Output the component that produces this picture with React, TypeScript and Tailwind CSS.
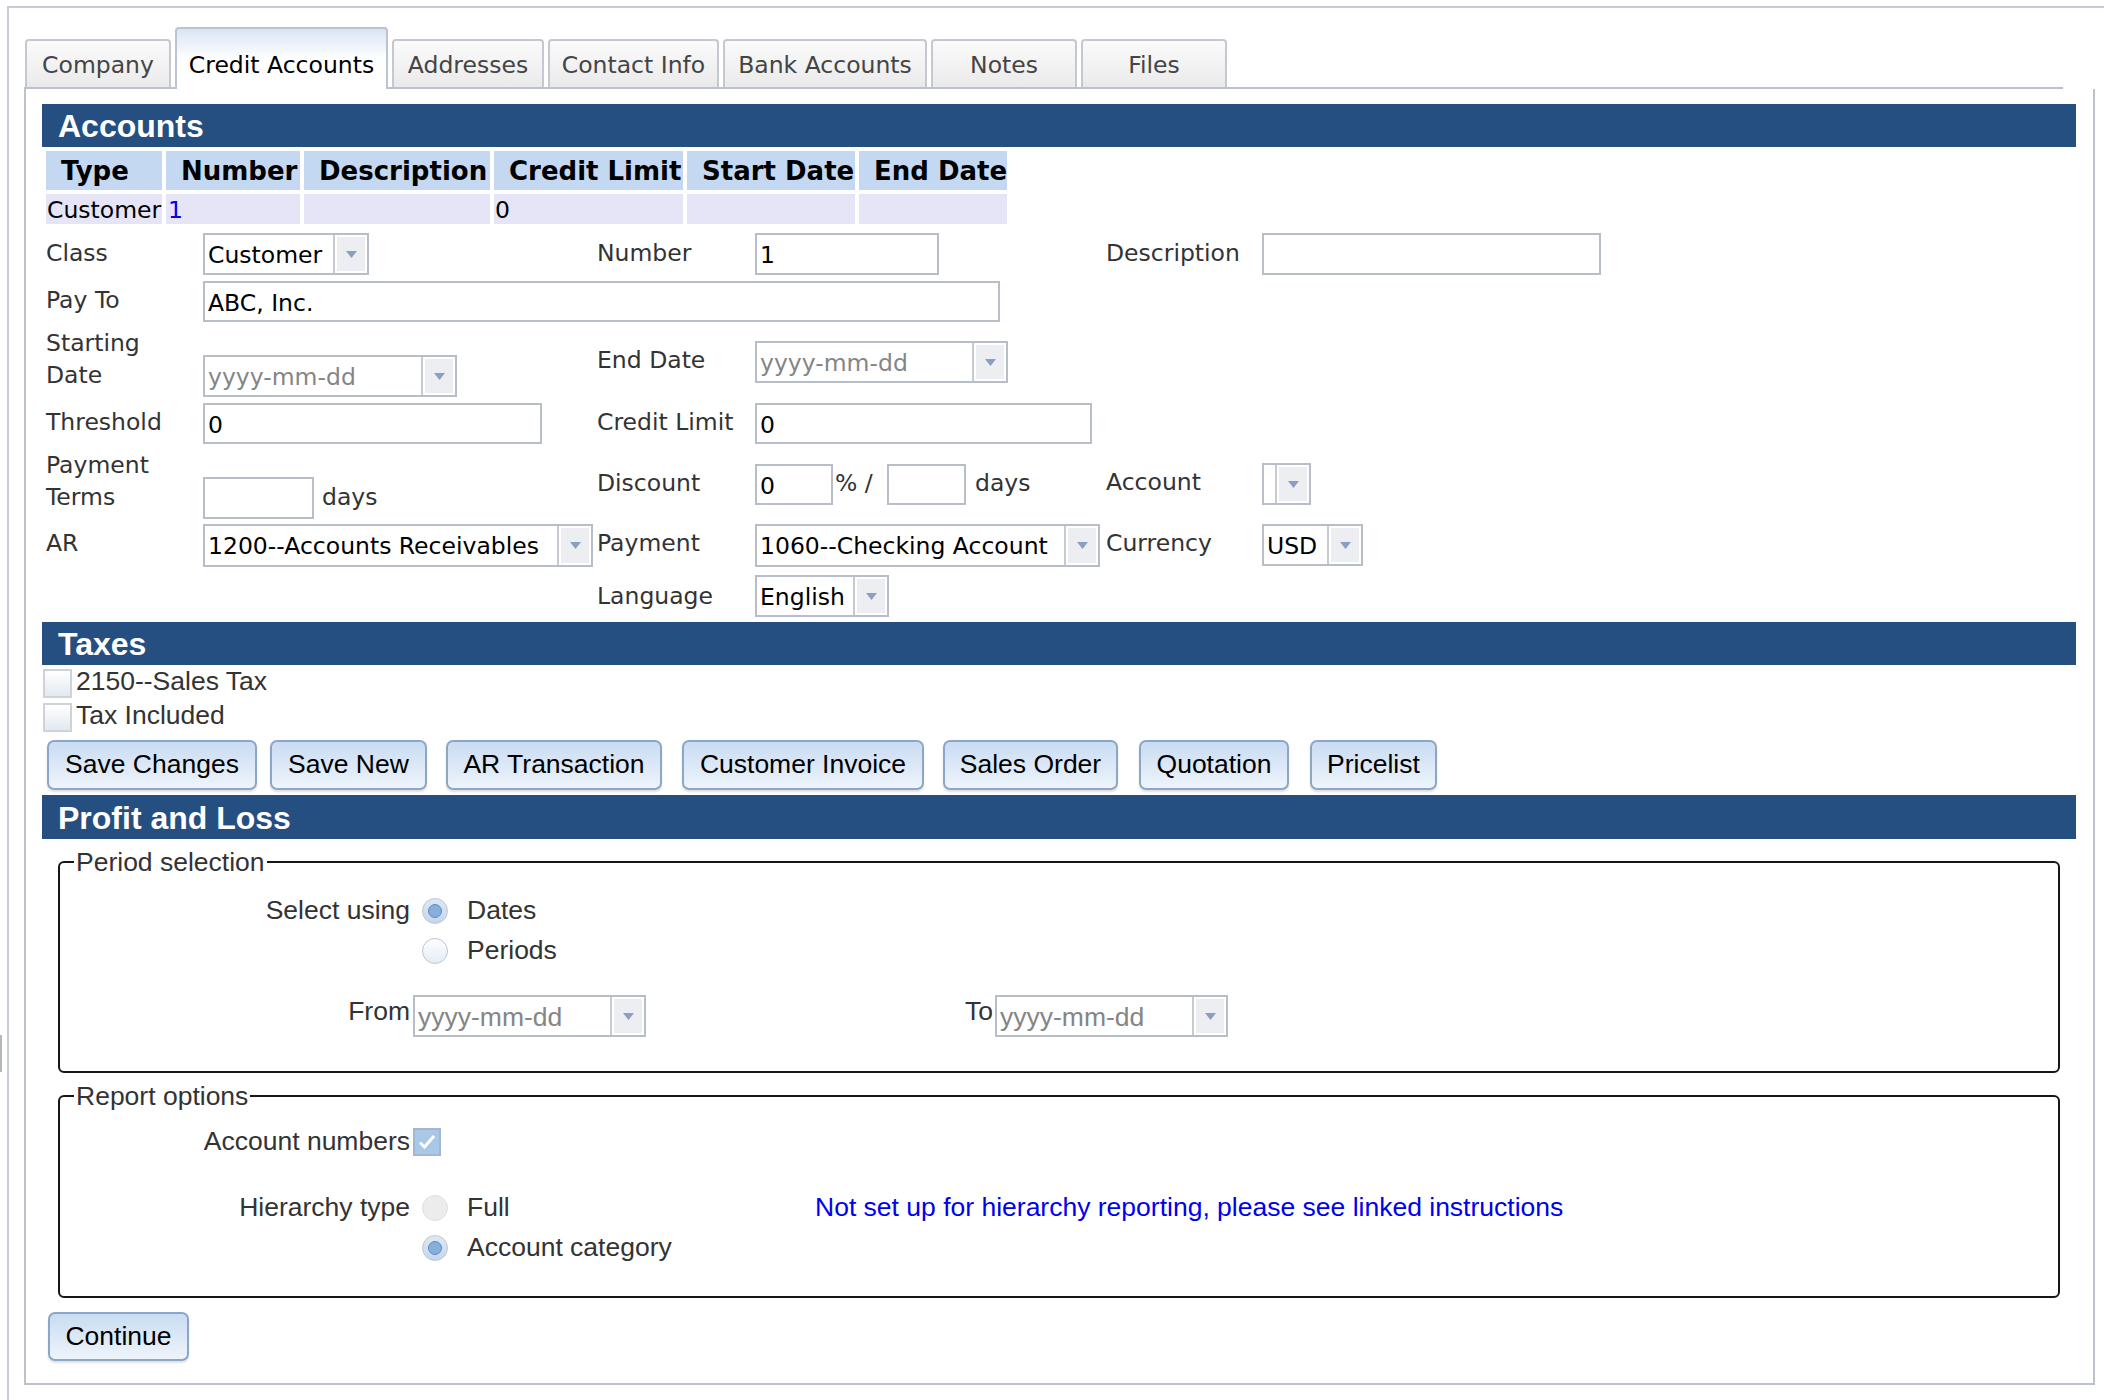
import React from "react";

const V = "font-['DejaVu_Sans',Verdana,sans-serif]";
const H = "font-['Liberation_Sans',Arial,Helvetica,sans-serif]";

function Arrow() {
  return (
    <svg width="11" height="7" viewBox="0 0 11 7">
      <path d="M0 0h11L5.5 7z" fill="#8b9ec4" />
    </svg>
  );
}

function Select({
  className,
  text,
  placeholder,
  helv,
}: {
  className: string;
  text?: string;
  placeholder?: boolean;
  helv?: boolean;
}) {
  return (
    <div className={`flex border-2 border-[#b7bec9] bg-white ${className}`}>
      <div
        className={`flex-1 overflow-hidden whitespace-nowrap pl-[3px] pt-[2px] leading-[36px] ${
          helv ? `${H} text-[26.5px]` : `${V} text-[23.5px]`
        } ${placeholder ? "text-[#858585]" : "text-black"}`}
      >
        {text}
      </div>
      <div className="w-[34px] shrink-0 border-l-2 border-[#c6cbd3] p-[2px]">
        <div className="flex h-full items-center justify-center bg-[#eceef2]">
          <Arrow />
        </div>
      </div>
    </div>
  );
}

function Input({ className, value }: { className: string; value: string }) {
  return (
    <input
      readOnly
      value={value}
      className={`border-2 border-[#b7bec9] bg-white pl-[3px] pt-[2px] text-[23.5px] text-black outline-none ${V} ${className}`}
    />
  );
}

function Radio({ checked, disabled }: { checked?: boolean; disabled?: boolean }) {
  if (disabled)
    return <div className="h-[26px] w-[26px] rounded-full border border-[#dedede] bg-[#ececec]" />;
  return (
    <div
      className={`flex h-[26px] w-[26px] items-center justify-center rounded-full border border-[#bcc6d2] bg-gradient-to-b ${
        checked ? "from-[#dfe8f3] to-[#c5d6ea]" : "from-[#ffffff] to-[#e4ecf5]"
      }`}
    >
      {checked && <div className="h-[14px] w-[14px] rounded-full border border-[#5d8cc2] bg-[#86afdc]" />}
    </div>
  );
}

function Box({ checked }: { checked?: boolean }) {
  if (checked)
    return (
      <div className="flex h-[28px] w-[28px] items-center justify-center border-2 border-[#a3b8d0] bg-[#a9c7e7]">
        <svg width="20" height="18" viewBox="0 0 20 18">
          <path d="M3 9.5l4.5 4.5L17 3" stroke="#fff" strokeWidth="3" fill="none" />
        </svg>
      </div>
    );
  return <div className="h-[29px] w-[29px] border-2 border-[#cfd2d6] bg-gradient-to-b from-[#ffffff] to-[#e3e9f1]" />;
}

function Bar({ title, h }: { title: string; h: string }) {
  return (
    <div className={`flex items-center bg-[#254f80] pl-[16px] pt-[1px] text-[32px] font-bold text-white ${H} ${h}`}>
      {title}
    </div>
  );
}

const tabs = [
  { name: "Company", w: "w-[146px]" },
  { name: "Credit Accounts", w: "w-[213px]", active: true },
  { name: "Addresses", w: "w-[152px]" },
  { name: "Contact Info", w: "w-[171px]" },
  { name: "Bank Accounts", w: "w-[204px]" },
  { name: "Notes", w: "w-[146px]" },
  { name: "Files", w: "w-[146px]" },
];

const buttons = [
  { t: "Save Changes", c: "ml-[5px] w-[210px]" },
  { t: "Save New", c: "ml-[13px] w-[157px]" },
  { t: "AR Transaction", c: "ml-[19px] w-[216px]" },
  { t: "Customer Invoice", c: "ml-[20px] w-[242px]" },
  { t: "Sales Order", c: "ml-[19px] w-[175px]" },
  { t: "Quotation", c: "ml-[21px] w-[150px]" },
  { t: "Pricelist", c: "ml-[21px] w-[127px]" },
];

function Btn({ t, c }: { t: string; c: string }) {
  return (
    <div
      className={`flex h-[50px] items-center justify-center rounded-[7px] border-2 border-[#8ba6c6] bg-gradient-to-b from-[#c9dcf2] to-[#eef4fb] text-[26.5px] text-black shadow-[0_2px_2px_rgba(0,0,0,0.12)] ${c}`}
    >
      {t}
    </div>
  );
}

const cols = "grid grid-cols-[116px_134px_186px_189px_168px_148px] gap-[4px]";

export default function App() {
  return (
    <div className="relative h-[1400px] w-[2104px] overflow-hidden bg-white pl-[7px] pt-[6px]">
      <div className="absolute left-0 top-[1035px] h-[37px] w-[2px] bg-[#b4b8bf]" />
      <div className="h-full border-l-2 border-t-2 border-[#c8ccd4] pl-[15px] pt-[19px]">
        {/* tabs */}
        <div className={`flex h-[62px] w-[2039px] items-end gap-[4px] border-b-2 border-[#bcc2cb] pl-[1px] ${V} text-[23.5px]`}>
          {tabs.map((t) =>
            t.active ? (
              <div
                key={t.name}
                className={`relative -mb-[2px] flex h-[62px] items-end justify-center rounded-t-[4px] border-2 border-b-0 border-[#bac4d2] bg-gradient-to-b from-[#d9e5f4] via-white to-white pb-[10px] leading-[28px] text-black ${t.w}`}
              >
                {t.name}
              </div>
            ) : (
              <div
                key={t.name}
                className={`flex h-[48px] items-end justify-center rounded-t-[4px] border-2 border-b-0 border-[#c4c9d1] bg-gradient-to-b from-[#fbfbfb] to-[#eaeaea] pb-[8px] leading-[28px] text-[#444] ${t.w}`}
              >
                {t.name}
              </div>
            )
          )}
        </div>

        {/* panel */}
        <div className="w-[2071px] border-x-2 border-b-2 border-[#bcc2cb] pb-[22px] pl-[16px] pr-[17px] pt-[15px]">
          <Bar title="Accounts" h="h-[43px]" />

          <div className={`p-[4px] ${V}`}>
            <div className={`${cols} text-[26px] font-bold text-black`}>
              {["Type", "Number", "Description", "Credit Limit", "Start Date", "End Date"].map((c) => (
                <div key={c} className="h-[39px] whitespace-nowrap bg-[#c4d9f1] pl-[15px] pt-[1px] leading-[39px]">
                  {c}
                </div>
              ))}
            </div>
            <div className={`${cols} mt-[4px] text-[23.5px] text-black`}>
              <div className="h-[30px] bg-[#e5e5f7] pl-[1px] pt-[1px] leading-[30px]">Customer</div>
              <div className="h-[30px] bg-[#e5e5f7] pl-[2px] pt-[1px] leading-[30px] text-[#0000ee]">1</div>
              <div className="h-[30px] bg-[#e5e5f7]" />
              <div className="h-[30px] bg-[#e5e5f7] pl-[1px] pt-[1px] leading-[30px]">0</div>
              <div className="h-[30px] bg-[#e5e5f7]" />
              <div className="h-[30px] bg-[#e5e5f7]" />
            </div>
          </div>

          {/* form */}
          <div className={`pl-[4px] text-[23.5px] leading-[32px] text-[#333] ${V}`}>
            <div className="flex h-[50px] items-start">
              <div className="mt-[9px] w-[157px]">Class</div>
              <div className="w-[394px] pt-[5px]">
                <Select className="h-[42px] w-[166px]" text="Customer" />
              </div>
              <div className="mt-[9px] w-[158px]">Number</div>
              <div className="w-[351px] pt-[5px]">
                <Input className="h-[42px] w-[184px]" value="1" />
              </div>
              <div className="mt-[9px] w-[156px]">Description</div>
              <div className="pt-[5px]">
                <Input className="h-[42px] w-[339px]" value="" />
              </div>
            </div>

            <div className="flex h-[46px] items-start">
              <div className="mt-[6px] w-[157px]">Pay To</div>
              <div className="pt-[3px]">
                <Input className="h-[41px] w-[797px]" value="ABC, Inc." />
              </div>
            </div>

            <div className="flex h-[75px] items-start">
              <div className="mt-[3px] w-[157px]">
                Starting
                <br />
                Date
              </div>
              <div className="w-[394px] pt-[31px]">
                <Select className="h-[42px] w-[254px]" text="yyyy-mm-dd" placeholder />
              </div>
              <div className="mt-[20px] w-[158px]">End Date</div>
              <div className="pt-[17px]">
                <Select className="h-[42px] w-[253px]" text="yyyy-mm-dd" placeholder />
              </div>
            </div>

            <div className="flex h-[47px] items-start">
              <div className="mt-[7px] w-[157px]">Threshold</div>
              <div className="w-[394px] pt-[4px]">
                <Input className="h-[41px] w-[339px]" value="0" />
              </div>
              <div className="mt-[7px] w-[158px]">Credit Limit</div>
              <div className="pt-[4px]">
                <Input className="h-[41px] w-[337px]" value="0" />
              </div>
            </div>

            <div className="flex h-[75px] items-start">
              <div className="mt-[3px] w-[157px]">
                Payment
                <br />
                Terms
              </div>
              <div className="flex w-[394px] items-start">
                <Input className="mt-[31px] h-[42px] w-[111px]" value="" />
                <div className="ml-[8px] mt-[35px]">days</div>
              </div>
              <div className="mt-[21px] w-[158px]">Discount</div>
              <div className="flex w-[351px] items-start">
                <Input className="mt-[18px] h-[41px] w-[78px]" value="0" />
                <div className="mt-[21px] w-[54px] pl-[2px]">% /</div>
                <Input className="mt-[18px] h-[41px] w-[79px]" value="" />
                <div className="ml-[9px] mt-[21px]">days</div>
              </div>
              <div className="mt-[20px] w-[156px]">Account</div>
              <div className="pt-[17px]">
                <Select className="h-[42px] w-[49px]" text="" />
              </div>
            </div>

            <div className="flex h-[49px] items-start">
              <div className="mt-[6px] w-[157px]">AR</div>
              <div className="w-[394px] pt-[3px]">
                <Select className="h-[43px] w-[390px]" text="1200--Accounts Receivables" />
              </div>
              <div className="mt-[6px] w-[158px]">Payment</div>
              <div className="w-[351px] pt-[3px]">
                <Select className="h-[43px] w-[345px]" text="1060--Checking Account" />
              </div>
              <div className="mt-[6px] w-[156px]">Currency</div>
              <div className="pt-[3px]">
                <Select className="h-[42px] w-[101px]" text="USD" />
              </div>
            </div>

            <div className="flex h-[52px] items-start">
              <div className="w-[551px]" />
              <div className="mt-[10px] w-[158px]">Language</div>
              <div className="pt-[5px]">
                <Select className="h-[42px] w-[134px]" text="English" />
              </div>
            </div>
          </div>

          <Bar title="Taxes" h="h-[43px]" />

          <div className={`${H} pt-[4px] text-[26.5px] leading-[24px] text-[#333]`}>
            <div className="flex h-[34px] items-start">
              <div className="ml-[1px]">
                <Box />
              </div>
              <div className="ml-[4px]">2150--Sales Tax</div>
            </div>
            <div className="flex h-[34px] items-start">
              <div className="ml-[1px]">
                <Box />
              </div>
              <div className="ml-[4px]">Tax Included</div>
            </div>
          </div>

          <div className={`${H} mt-[3px] flex`}>
            {buttons.map((b) => (
              <Btn key={b.t} t={b.t} c={b.c} />
            ))}
          </div>

          <div className="mt-[5px]">
            <Bar title="Profit and Loss" h="h-[44px]" />
          </div>

          <div className={`${H} text-[26.5px] text-[#333]`}>
            <fieldset className="mx-[16px] mt-[8px] rounded-[6px] border-2 border-[#161616]">
              <legend className="ml-[14px] px-[2px] leading-[30px]">Period selection</legend>
              <div className="pb-[34px] pt-[14px]">
                <div className="flex h-[40px] items-center">
                  <div className="w-[350px] text-right">Select using</div>
                  <div className="ml-[12px]">
                    <Radio checked />
                  </div>
                  <div className="ml-[19px]">Dates</div>
                </div>
                <div className="flex h-[40px] items-center">
                  <div className="w-[350px]" />
                  <div className="ml-[12px]">
                    <Radio />
                  </div>
                  <div className="ml-[19px]">Periods</div>
                </div>
                <div className="mt-[24px] flex items-start">
                  <div className="w-[350px] pt-[1px] text-right leading-[30px]">From</div>
                  <Select className="ml-[3px] h-[42px] w-[233px]" text="yyyy-mm-dd" placeholder helv />
                  <div className="w-[349px] pr-[2px] pt-[1px] text-right leading-[30px]">To</div>
                  <Select className="h-[42px] w-[233px]" text="yyyy-mm-dd" placeholder helv />
                </div>
              </div>
            </fieldset>

            <fieldset className="mx-[16px] mt-[8px] rounded-[6px] border-2 border-[#161616]">
              <legend className="ml-[14px] px-[2px] leading-[30px]">Report options</legend>
              <div className="pb-[28px] pt-[11px]">
                <div className="flex h-[40px] items-center">
                  <div className="w-[350px] text-right">Account numbers</div>
                  <div className="ml-[3px]">
                    <Box checked />
                  </div>
                </div>
                <div className="mt-[26px] flex h-[40px] items-center">
                  <div className="w-[350px] text-right">Hierarchy type</div>
                  <div className="flex w-[405px] items-center">
                    <div className="ml-[12px]">
                      <Radio disabled />
                    </div>
                    <div className="ml-[19px]">Full</div>
                  </div>
                  <div className="text-[#0000ee]">Not set up for hierarchy reporting, please see linked instructions</div>
                </div>
                <div className="flex h-[40px] items-center">
                  <div className="w-[350px]" />
                  <div className="ml-[12px]">
                    <Radio checked />
                  </div>
                  <div className="ml-[19px]">Account category</div>
                </div>
              </div>
            </fieldset>

            <div className="mt-[14px] flex">
              <div className="ml-[6px] flex h-[49px] w-[141px] items-center justify-center rounded-[7px] border-2 border-[#8ba6c6] bg-gradient-to-b from-[#c9dcf2] to-[#eef4fb] text-black shadow-[0_2px_2px_rgba(0,0,0,0.12)]">
                Continue
              </div>
            </div>
          </div>
        </div>
      </div>
    </div>
  );
}
